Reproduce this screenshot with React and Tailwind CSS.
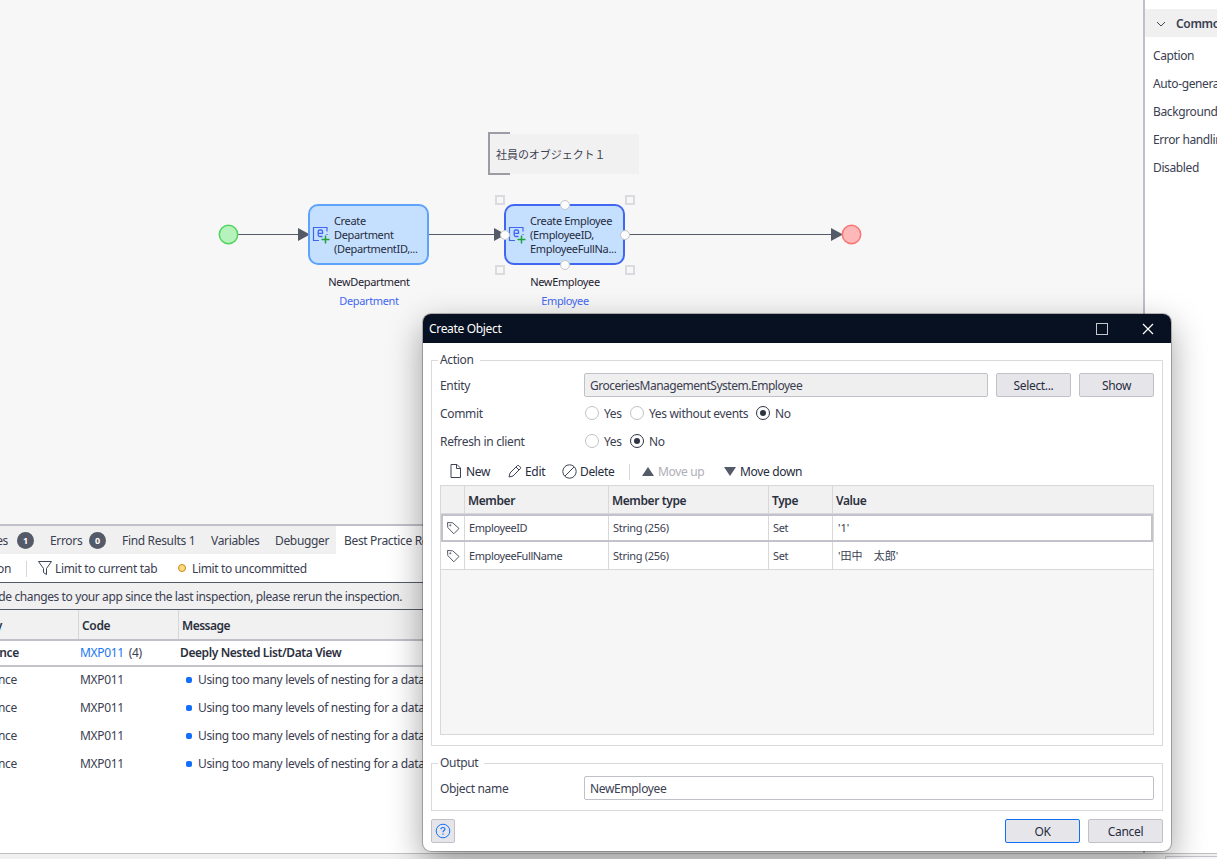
import { clsx } from 'clsx';

const HANDLES = [
  [500, 200],
  [630, 200],
  [500, 270],
  [630, 270],
];

const PORTS = [
  [565, 205],
  [505, 235],
  [625, 235],
  [565, 265],
];

const PROPERTIES = ['Caption', 'Auto-generate caption', 'Background color', 'Error handling', 'Disabled'];

const MEMBERS = [
  { name: 'EmployeeID', memberType: 'String (256)', type: 'Set', value: "'1'" },
  { name: 'EmployeeFullName', memberType: 'String (256)', type: 'Set', value: "'田中　太郎'" },
];

function EntityIcon() {
  return (
    <svg className="shrink-0" width="18" height="18" viewBox="0 0 18 18" fill="none">
      <path d="M7 14.500H1.500V1.500h13.500v4M15 8v1" stroke="#3f66f0" strokeWidth="1.200" />
      <path d="M6.200 7.400h4.300V5.500q0-1.500-1.500-1.500H7.700q-1.500 0-1.500 1.500v3.500q0 1.500 1.500 1.500h2.800" stroke="#3f66f0" strokeWidth="1.300" />
      <path d="M13.500 9.500v8M9.500 13.500h8" stroke="#21a038" strokeWidth="1.500" />
    </svg>
  );
}

function ActivityNode({ className, lines, selected }) {
  return (
    <div
      className={clsx(
        'absolute top-[204px] w-[121px] h-[61px] rounded-[10px] border-2 bg-[#c5e0ff] flex items-center pl-[2px]',
        selected ? 'border-[#4166ef]' : 'border-[#5ea3fb]',
        className
      )}
    >
      <EntityIcon />
      <div className="ml-[4px] text-[11px] leading-[14px] tracking-[-0.34px] text-[#272c3d] whitespace-nowrap">
        {lines.map(line => <div key={line}>{line}</div>)}
      </div>
    </div>
  );
}

function NodeLabel({ className, name, entity }) {
  return (
    <div className={clsx('absolute top-[272px] w-[120px] text-center text-[11px] leading-[19px] tracking-[-0.36px]', className)}>
      <div className="text-[#1e2230]">{name}</div>
      <div className="text-[#4368f0]">{entity}</div>
    </div>
  );
}

function Canvas() {
  return (
    <div className="relative h-[524px] shrink-0 bg-[#f7f7f7] overflow-hidden">
      <svg className="absolute inset-0" width="1143" height="524" fill="none">
        <path d="M238 234.5H300M428 234.5H496M624 234.5H833" stroke="#555a68" />
        <path d="M298 228v13l12-6.500zM494 228v13l12-6.500zM831 228v13l12-6.500z" fill="#555a68" />
        <circle cx="228.500" cy="234.500" r="9.200" fill="#b6f2bc" stroke="#50d35f" strokeWidth="1.500" />
        <circle cx="851.500" cy="234.500" r="9.200" fill="#ffb8b8" stroke="#fb7474" strokeWidth="1.500" />
        <rect x="489" y="134" width="150" height="40" fill="#f1f1f1" />
        <path d="M510 133H489v41h21" stroke="#9b9ca6" strokeWidth="2" />
      </svg>
      <div className="absolute left-[496px] top-[146px] text-[11px] leading-[18px] tracking-[-0.05px] text-[#3d4252]">
        社員のオブジェクト１
      </div>
      <ActivityNode className="left-[308px]" lines={['Create', 'Department', '(DepartmentID,...']} />
      <ActivityNode className="left-[504px]" lines={['Create Employee', '(EmployeeID,', 'EmployeeFullNa...']} selected />
      <NodeLabel className="left-[309px]" name="NewDepartment" entity="Department" />
      <NodeLabel className="left-[505px]" name="NewEmployee" entity="Employee" />
      <svg className="absolute inset-0" width="1143" height="524">
        {HANDLES.map(([x, y]) => (
          <rect key={`${x}-${y}`} x={x - 4} y={y - 4} width="8" height="8" fill="#f7f7f7" stroke="#dadadf" strokeWidth="2" />
        ))}
        {PORTS.map(([x, y]) => (
          <circle key={`${x}-${y}`} cx={x} cy={y} r="4.500" fill="#fcfcfc" stroke="#c3c4ca" />
        ))}
      </svg>
    </div>
  );
}

function Badge({ children }) {
  return (
    <span className="w-[17px] h-[17px] -mt-px rounded-full bg-[#555a68] text-white text-[9px] font-bold flex items-center justify-center">
      {children}
    </span>
  );
}

function TabBar() {
  return (
    <div className="h-[28px] shrink-0 bg-[#f0f0f0] flex items-center whitespace-nowrap">
      <div className="w-[50px] pt-[2px] flex items-center">
        <span className="w-[17px] shrink-0 flex justify-end pr-[9px]">Changes</span>
        <Badge>1</Badge>
      </div>
      <div className="w-[72px] pt-[2px] flex items-center">
        <span className="w-[39px]">Errors</span>
        <Badge>0</Badge>
      </div>
      <div className="w-[89px] pt-[2px]">Find Results 1</div>
      <div className="w-[64px] pt-[2px]">Variables</div>
      <div className="w-[61px] pt-[2px]">Debugger</div>
      <div className="h-full bg-white flex items-center pt-[2px] pl-[8px] w-[300px]">Best Practice Recommender</div>
    </div>
  );
}

function InspectionRow({ children }) {
  return (
    <div className="h-[28px] flex items-center whitespace-nowrap">
      <div className="w-[80px] shrink-0">
        <div className="w-[17px] flex justify-end">Performance</div>
      </div>
      {children}
    </div>
  );
}

function BottomPanel() {
  return (
    <div className="flex-1 flex flex-col border-t-2 border-[#bfc0c8] bg-white">
      <TabBar />
      <div className="h-[28px] pt-px shrink-0 flex items-center">
        <div className="w-[27px] h-4 shrink-0 flex items-center border-r border-[#d5d5da]">
          <span className="w-[11px] shrink-0 flex justify-end">inspection</span>
        </div>
        <svg className="ml-[10px] mb-[2px] shrink-0" width="16" height="16" viewBox="0 0 16 16" fill="none" stroke="#3f4454">
          <path d="M1.500 1.500h13L9.500 8.500v6l-3-2v-4z" />
        </svg>
        <span className="w-[123px] ml-[2px] shrink-0 whitespace-nowrap">Limit to current tab</span>
        <span className="w-[8px] h-[8px] mb-[2px] shrink-0 rounded-full border border-[#c98912] bg-[#fddb82]" />
        <span className="ml-[6px] whitespace-nowrap tracking-[-0.37px]">Limit to uncommitted</span>
      </div>
      <div className="h-[28px] shrink-0 border-y border-[#555a68] bg-[#f0f0f0] flex items-center">
        <div className="w-[402px] pt-[2px] flex justify-end whitespace-nowrap tracking-[-0.39px]">
          You have made changes to your app since the last inspection, please rerun the inspection.
        </div>
      </div>
      <div className="h-[31px] shrink-0 bg-[#f1f1f1] border-b-2 border-[#bfc0c8] flex items-center font-semibold text-[#2b3040]">
        <div className="w-[79px] h-full pt-[2px] border-r border-[#d5d5da] flex items-center">
          <span className="w-[2px] flex justify-end">Category</span>
        </div>
        <div className="w-[100px] h-full pt-[2px] pl-[3px] border-r border-[#d5d5da] flex items-center">Code</div>
        <div className="pt-[2px] pl-[3px] tracking-[-0.5px]">Message</div>
      </div>
      <div className="h-[26px] pb-px shrink-0 border-b-2 border-[#c3c4cb] flex items-center">
        <div className="w-[80px] shrink-0 font-semibold text-[#2b3040]">
          <div className="w-[19px] flex justify-end">Performance</div>
        </div>
        <div className="w-[100px]">
          <span className="text-[#1a76ef]">MXP011</span>
          <span className="ml-[5px]">(4)</span>
        </div>
        <div className="font-semibold tracking-[-0.4px] text-[#2b3040]">Deeply Nested List/Data View</div>
      </div>
      <div className="-mt-px">
        {[1, 2, 3, 4].map(n => (
          <InspectionRow key={n}>
            <div className="w-[106px] shrink-0">MXP011</div>
            <span className="w-[6px] h-[6px] rounded-[2px] bg-[#146ff8]" />
            <span className="ml-[6px]">Using too many levels of nesting for a data view</span>
          </InspectionRow>
        ))}
      </div>
    </div>
  );
}

function PropertiesPanel() {
  return (
    <div className="flex-1 border-l-2 border-[#bfc0c8] bg-white pt-[9px] overflow-hidden whitespace-nowrap">
      <div className="h-[28px] pt-px bg-[#f0f0f0] flex items-center font-semibold text-[#3b4051]">
        <svg className="ml-[11px] mr-[10px] shrink-0" width="10" height="10" viewBox="0 0 10 10" fill="none" stroke="#3f4454">
          <path d="M1 3l4 4 4-4" />
        </svg>
        Common
      </div>
      <div className="pt-[5px] tracking-[-0.38px]">
        {PROPERTIES.map(label => (
          <div key={label} className="h-[28px] pl-[8px] flex items-center">{label}</div>
        ))}
      </div>
    </div>
  );
}

function Radio({ label, checked, className }) {
  return (
    <label className={clsx('flex items-center gap-[5px]', className)}>
      <span
        className={clsx(
          'w-[14px] h-[14px] rounded-full border bg-white flex items-center justify-center',
          checked ? 'border-[#2f3444]' : 'border-[#c0c1c8]'
        )}
      >
        {checked && <span className="w-[6px] h-[6px] rounded-full bg-[#2f3444]" />}
      </span>
      <span className="pt-[2px]">{label}</span>
    </label>
  );
}

function Button({ children, primary }) {
  return (
    <button
      type="button"
      className={clsx(
        'w-[75px] h-[24px] pt-[2px] shrink-0 rounded-[2px] border bg-[#e6e6ea] text-[#272c3d] flex items-center justify-center',
        primary ? 'border-[#146ff8]' : 'border-[#c0c1c8]'
      )}
    >
      {children}
    </button>
  );
}

function Group({ title, className, children }) {
  return (
    <fieldset className={clsx('border border-[#dadadc] pl-[8px] pr-[8px] min-w-0', className)}>
      <legend className="-ml-[2px] pl-[2px] pr-[6px] h-[18px] leading-[18px]">{title}</legend>
      {children}
    </fieldset>
  );
}

function TagIcon() {
  return (
    <svg width="14" height="14" viewBox="0 0 14 14" fill="none" stroke="#555a68" strokeLinejoin="round">
      <path d="M1.500 1.500l.3 5 6 6.300 5.200-5.300L6.700 1.800z" />
      <circle cx="4.300" cy="4.300" r=".6" />
    </svg>
  );
}

function Toolbar() {
  return (
    <div className="h-[28px] flex items-center text-[#272c3d]">
      <svg className="ml-[10px] mb-[2px]" width="12" height="14" viewBox="0 0 12 14" fill="none" stroke="#3f4454">
        <path d="M1 .5h6L10.500 4v9.500H1zM6.500 .5V4.500h4" />
      </svg>
      <span className="ml-[4px] w-[42px]">New</span>
      <svg className="mb-[2px]" width="14" height="14" viewBox="0 0 14 14" fill="none" stroke="#3f4454">
        <path d="M1 13l1-4L9.300 1.700q.8-.8 1.600 0l1.400 1.400q.8.800 0 1.600L5 12zM8 3l3 3" />
      </svg>
      <span className="ml-[3px] w-[37px]">Edit</span>
      <svg className="mb-[2px]" width="15" height="15" viewBox="0 0 15 15" fill="none" stroke="#3f4454">
        <circle cx="7.500" cy="7.500" r="6.700" />
        <path d="M3 12L12 3" />
      </svg>
      <span className="ml-[3px] w-[49px] tracking-[-0.35px]">Delete</span>
      <span className="w-px h-4 bg-[#d5d5da]" />
      <svg className="ml-[12px] mb-[2px]" width="12" height="9" viewBox="0 0 12 9" fill="#555a68">
        <path d="M6 0l6 9H0z" />
      </svg>
      <span className="ml-[4px] w-[66px] text-[#adaeb7]">Move up</span>
      <svg className="mb-[2px]" width="12" height="9" viewBox="0 0 12 9" fill="#555a68">
        <path d="M6 9l6-9H0z" />
      </svg>
      <span className="ml-[4px]">Move down</span>
    </div>
  );
}

function MemberTable() {
  return (
    <div className="w-[714px] h-[250px] -mt-px border border-[#d8d8da] bg-[#f6f6f6]">
      <div className="grid grid-cols-[24px_144px_160px_64px_1fr] h-[28px] bg-[#f1f1f1] border-b border-[#d8d8da] font-semibold tracking-[-0.4px] text-[#2b3040]">
        {['', 'Member', 'Member type', 'Type', 'Value'].map((title, i) => (
          <div key={i} className={clsx('flex items-center pl-[3px] pt-[2px]', i < 4 && 'border-r border-[#d8d8da]')}>
            {title}
          </div>
        ))}
      </div>
      {MEMBERS.map((m, i) => (
        <div
          key={m.name}
          className={clsx(
            'relative grid grid-cols-[24px_144px_160px_64px_1fr] h-[28px] bg-white text-[11px] tracking-[-0.4px]',
            i === 1 && 'border-b border-[#d8d8da]'
          )}
        >
          <div className="flex items-center justify-center border-r border-[#d8d8da]"><TagIcon /></div>
          <div className="flex items-center pl-[4px] border-r border-[#d8d8da]">{m.name}</div>
          <div className="flex items-center pl-[4px] border-r border-[#d8d8da] tracking-[-0.3px]">{m.memberType}</div>
          <div className="flex items-center pl-[4px] border-r border-[#d8d8da]">{m.type}</div>
          <div className="flex items-center pl-[5px] tracking-[0.05px]">{m.value}</div>
          {i === 0 && <div className="absolute inset-0 border-2 border-[#c1c2ca]" />}
        </div>
      ))}
    </div>
  );
}

function CreateObjectDialog() {
  return (
    <div className="absolute left-[423px] top-[314px] w-[748px] h-[537px] rounded-[8px] overflow-hidden bg-white flex flex-col shadow-[0_0_0_1px_rgba(0,0,0,0.25),0_12px_34px_rgba(0,0,0,0.38)]">
      <div className="h-[29px] shrink-0 bg-[#081121] text-white flex items-center pl-[6px] pr-[17px]">
        <span className="flex-1 pt-px">Create Object</span>
        <span className="w-[12px] h-[12px] border border-[#c4c7cc]" />
        <svg className="ml-[34px]" width="12" height="12" viewBox="0 0 12 12" stroke="#fff" strokeWidth="1.200" fill="none">
          <path d="M1 1l10 10M11 1L1 11" />
        </svg>
      </div>
      <div className="flex-1 px-[8px] pt-[8px]">
        <Group title="Action" className="h-[395px]">
          <div className="-mt-px">
            <div className="h-[34px] flex items-center">
              <div className="w-[144px] shrink-0 pt-[2px]">Entity</div>
              <div className="w-[404px] h-[24px] shrink-0 rounded-[2px] border border-[#c0c1c8] bg-[#efefef] flex items-center pt-[2px] pl-[5px] mr-[8px] tracking-[-0.48px]">
                GroceriesManagementSystem.Employee
              </div>
              <Button>Select...</Button>
              <div className="w-[8px] shrink-0" />
              <Button>Show</Button>
            </div>
            <div className="h-[22px] flex items-center">
              <div className="w-[145px] pt-[2px]">Commit</div>
              <Radio label="Yes" className="w-[45px]" />
              <Radio label="Yes without events" className="w-[126px]" />
              <Radio label="No" checked />
            </div>
            <div className="h-[34px] flex items-center">
              <div className="w-[145px] pt-[2px]">Refresh in client</div>
              <Radio label="Yes" className="w-[45px]" />
              <Radio label="No" checked />
            </div>
            <Toolbar />
            <MemberTable />
          </div>
        </Group>
        <Group title="Output" className="h-[57px] mt-[8px]">
          <div className="h-[34px] -mt-px flex items-center">
            <div className="w-[144px] shrink-0 pt-[2px]">Object name</div>
            <div className="w-[570px] h-[24px] shrink-0 rounded-[2px] border border-[#c0c1c8] bg-white flex items-center pt-[2px] pl-[5px]">
              NewEmployee
            </div>
          </div>
        </Group>
        <div className="mt-[8px] flex items-center">
          <div className="w-[24px] h-[24px] rounded-[2px] border border-[#c0c1c8] bg-[#e6e6ea] flex items-center justify-center mr-auto">
            <svg width="16" height="16" viewBox="0 0 16 16" fill="none" stroke="#146ff8">
              <circle cx="8" cy="8" r="6.800" />
              <path d="M6 6.300V5.700Q6.200 4.500 8 4.500t2 1.500q0 .8-1 1.500T8 9.200M8 10.500v1.200" strokeWidth="1.200" />
            </svg>
          </div>
          <Button primary>OK</Button>
          <div className="w-[8px]" />
          <Button>Cancel</Button>
        </div>
      </div>
    </div>
  );
}

export default function App() {
  return (
    <div className="relative w-[1217px] h-[859px] overflow-hidden bg-[#f0f0f0] flex flex-col font-['Noto_Sans','Noto_Sans_CJK_JP',sans-serif] text-[12px] leading-[16px] tracking-[-0.33px] text-[#3b4051]">
      <div className="h-[853px] shrink-0 flex">
        <div className="w-[1143px] shrink-0 flex flex-col overflow-hidden">
          <Canvas />
          <BottomPanel />
        </div>
        <PropertiesPanel />
      </div>
      <div className="flex-1 border-t border-[#bfc0c4] pt-[2px] flex justify-end">
        <div className="w-[52px] h-[10px] rounded-tl-[2px] border-t border-l border-[#c0c1c8] bg-[#f7f7f7]" />
      </div>
      <CreateObjectDialog />
    </div>
  );
}
